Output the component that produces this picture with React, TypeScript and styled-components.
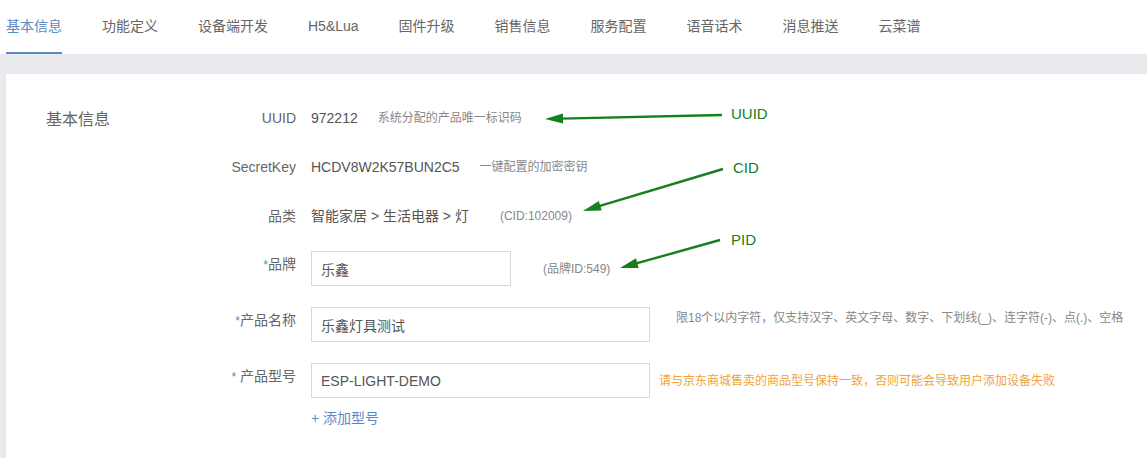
import React from "react";
import styled, { createGlobalStyle } from "styled-components";

const GlobalStyle = createGlobalStyle`
  html, body { margin: 0; padding: 0; background: #fff; }
  body {
    font-family: "Liberation Sans", "Noto Sans CJK SC", sans-serif;
    color: #666;
  }
  * { box-sizing: border-box; }
`;

const Page = styled.div`
  position: relative;
  width: 1147px;
  height: 458px;
  overflow: hidden;
  display: flex;
  flex-direction: column;
  background: #e9eaee;
`;

const TabBar = styled.nav`
  display: flex;
  gap: 40px;
  height: 54px;
  padding-left: 6px;
  background: #fff;
`;

const Tab = styled.div<{ $active?: boolean }>`
  display: flex;
  align-items: center;
  font-size: 14px;
  color: ${(p) => (p.$active ? "#5b8ac6" : "#666")};
  border-bottom: 2px solid ${(p) => (p.$active ? "#5f88bf" : "transparent")};
  padding-top: 0;
  line-height: 20px;
`;

const Main = styled.main`
  flex: 1;
  display: flex;
  padding: 20px 0 0 6px;
`;

const Panel = styled.section`
  flex: 1;
  background: #fff;
  display: grid;
  grid-template-columns: 150px 1fr;
  align-content: start;
  padding: 34px 0 0 40px;
`;

const SectionTitle = styled.h2`
  margin: 0;
  font-size: 16px;
  font-weight: normal;
  line-height: 24px;
  color: #666;
`;

const Form = styled.div`
  display: flex;
  flex-direction: column;
`;

const Row = styled.div<{ $mb: number; $input?: boolean }>`
  display: flex;
  align-items: ${(p) => (p.$input ? "stretch" : "center")};
  margin-bottom: ${(p) => p.$mb}px;
  line-height: 20px;
`;

const Label = styled.div<{ $input?: boolean }>`
  flex: 0 0 100px;
  text-align: right;
  font-size: 14px;
  color: #666;
  padding-top: ${(p) => (p.$input ? 3 : 0)}px;
  margin-right: 15px;
  white-space: pre;
`;

const Star = styled.span`
  color: #5b8ac6;
  font-size: 12px;
`;

const Value = styled.span`
  font-size: 14px;
  color: #555;
`;

const Hint = styled.span<{ $ml: number; $color?: string; $self?: string; $pt?: number }>`
  font-size: 12px;
  color: ${(p) => p.$color || "#888"};
  margin-left: ${(p) => p.$ml}px;
  align-self: ${(p) => p.$self || "center"};
  padding-top: ${(p) => p.$pt || 0}px;
  white-space: nowrap;
`;

const Input = styled.input<{ $w: number }>`
  width: ${(p) => p.$w}px;
  height: 35px;
  border: 1px solid #d9d9d9;
  border-radius: 0;
  padding: 0 9px;
  font-family: inherit;
  font-size: 14px;
  color: #555;
  outline: none;
  background: #fff;
`;

const AddLink = styled.a`
  margin-left: 115px;
  margin-top: 10px;
  font-size: 14px;
  line-height: 20px;
  color: #5b8ac6;
  text-decoration: none;
  cursor: pointer;
`;

const Annotations = styled.svg`
  position: absolute;
  left: 0;
  top: 0;
  pointer-events: none;
`;

const GREEN = "#16801c";

type ArrowProps = { x1: number; y1: number; x2: number; y2: number };

const Arrow = ({ x1, y1, x2, y2 }: ArrowProps) => {
  const dx = x2 - x1;
  const dy = y2 - y1;
  const len = Math.hypot(dx, dy);
  const ux = dx / len;
  const uy = dy / len;
  const hl = 18;
  const hw = 5;
  const bx = x2 - ux * hl;
  const by = y2 - uy * hl;
  const px = -uy * hw;
  const py = ux * hw;
  const pts = `${x2},${y2} ${bx + px},${by + py} ${bx - px},${by - py}`;
  return (
    <g>
      <line x1={x1} y1={y1} x2={bx + ux * 2} y2={by + uy * 2} stroke={GREEN} strokeWidth={2.4} />
      <polygon points={pts} fill={GREEN} />
    </g>
  );
};

const tabs = ["基本信息", "功能定义", "设备端开发", "H5&Lua", "固件升级", "销售信息", "服务配置", "语音话术", "消息推送", "云菜谱"];

export default function App() {
  return (
    <>
      <GlobalStyle />
      <Page>
        <TabBar>
          {tabs.map((t, i) => (
            <Tab key={t} $active={i === 0}>
              {t}
            </Tab>
          ))}
        </TabBar>
        <Main>
          <Panel>
            <SectionTitle>基本信息</SectionTitle>
            <Form>
              <Row $mb={29}>
                <Label>UUID</Label>
                <Value>972212</Value>
                <Hint $ml={20}>系统分配的产品唯一标识码</Hint>
              </Row>
              <Row $mb={29}>
                <Label>SecretKey</Label>
                <Value>HCDV8W2K57BUN2C5</Value>
                <Hint $ml={20}>一键配置的加密密钥</Hint>
              </Row>
              <Row $mb={25}>
                <Label>品类</Label>
                <Value>智能家居 &gt; 生活电器 &gt; 灯</Value>
                <Hint $ml={31}>(CID:102009)</Hint>
              </Row>
              <Row $mb={21} $input>
                <Label $input>
                  <Star>*</Star>品牌
                </Label>
                <Input $w={200} defaultValue="乐鑫" />
                <Hint $ml={32}>(品牌ID:549)</Hint>
              </Row>
              <Row $mb={21} $input>
                <Label $input>
                  <Star>*</Star>产品名称
                </Label>
                <Input $w={339} defaultValue="乐鑫灯具测试" />
                <Hint $ml={26} $self="flex-start" $pt={1}>
                  限18个以内字符，仅支持汉字、英文字母、数字、下划线(_)、连字符(-)、点(.)、空格
                </Hint>
              </Row>
              <Row $mb={0} $input>
                <Label $input>
                  <Star>*</Star> 产品型号
                </Label>
                <Input $w={339} defaultValue="ESP-LIGHT-DEMO" />
                <Hint $ml={9} $color="#f0a33a">
                  请与京东商城售卖的商品型号保持一致，否则可能会导致用户添加设备失败
                </Hint>
              </Row>
              <AddLink>+ 添加型号</AddLink>
            </Form>
          </Panel>
        </Main>
        <Annotations width={1147} height={458} viewBox="0 0 1147 458">
          <Arrow x1={722} y1={115} x2={545} y2={119} />
          <Arrow x1={723} y1={169} x2={583} y2={211} />
          <Arrow x1={720} y1={240} x2={620} y2={268} />
          <g fill={GREEN} fontSize={15} fontFamily='"Liberation Sans", sans-serif'>
            <text x={731} y={119}>UUID</text>
            <text x={733} y={173}>CID</text>
            <text x={731} y={245}>PID</text>
          </g>
        </Annotations>
      </Page>
    </>
  );
}
